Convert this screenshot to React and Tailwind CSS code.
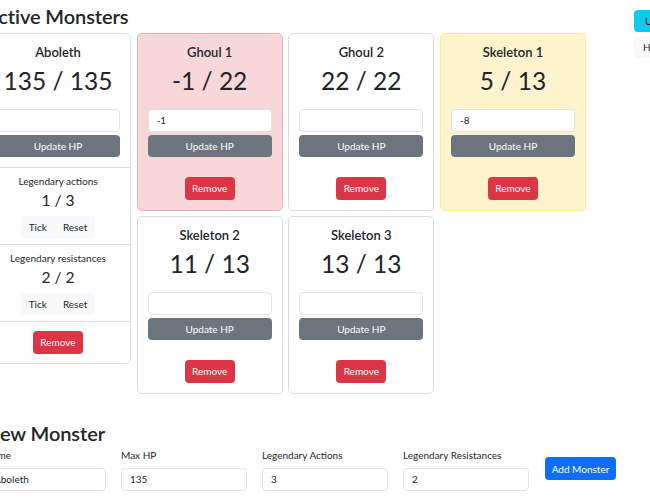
import React from "react";

const cardBase = "rounded-[5px] border text-center text-[#212529]";

function HpBody({ name, hp, value }) {
  return (
    <div className="px-[10px] pt-[10px] pb-[10px]">
      <div className="text-[13px] leading-[16px] font-semibold mb-[5px]">{name}</div>
      <div className="text-[24.5px] leading-[32px] mb-[12px]">{hp}</div>
      <input
        readOnly
        defaultValue={value}
        className="block w-full h-[23px] rounded-[4px] border border-[#dee2e6] bg-white px-[8px] text-[10px] text-left text-[#212529] outline-none"
      />
      <button className="block mt-[3px] w-full h-[22px] rounded-[4px] bg-[#6c757d] text-white text-[10px] leading-[16px]">
        Update HP
      </button>
    </div>
  );
}

function RemoveBtn() {
  return (
    <button className="h-[23px] w-[50px] rounded-[4px] bg-[#dc3545] text-white text-[10px] leading-[16px]">
      Remove
    </button>
  );
}

function Counter({ label, value }) {
  return (
    <div className="border-t border-[#dcdcdc] pt-[5px] pb-[6px]">
      <div className="text-[10px] leading-[16px]">{label}</div>
      <div className="text-[15.5px] leading-[19.2px] mt-[2px] mb-[5.6px]">{value}</div>
      <div className="flex justify-center">
        <div className="flex h-[22px] rounded-[4px] bg-[#f8f9fa] text-[10px] leading-[16px]">
          <button className="px-[8px]">Tick</button>
          <button className="px-[8px]">Reset</button>
        </div>
      </div>
    </div>
  );
}

function Card({ name, hp, value = "", variant }) {
  const v =
    variant === "danger"
      ? "bg-[#f8d7da] border-[#f1aeb5]"
      : variant === "warning"
      ? "bg-[#fff3cd] border-[#ffe69c]"
      : "bg-white border-[#dcdcdc]";
  return (
    <div className={`${cardBase} ${v}`}>
      <HpBody name={name} hp={hp} value={value} />
      <div className="flex justify-center px-[10px] pt-[10px] pb-[10px]">
        <RemoveBtn />
      </div>
    </div>
  );
}

function LegendCard() {
  return (
    <div className={`${cardBase} bg-white border-[#dcdcdc] row-span-2`}>
      <HpBody name="Aboleth" hp="135 / 135" value="" />
      <Counter label="Legendary actions" value="1 / 3" />
      <Counter label="Legendary resistances" value="2 / 2" />
      <div className="flex justify-center border-t border-[#dcdcdc] px-[10px] pt-[9px] pb-[9px]">
        <RemoveBtn />
      </div>
    </div>
  );
}

function Field({ label, value, w = "w-[126px]" }) {
  return (
    <div className={`${w} shrink-0`}>
      <div className="text-[10px] leading-[16px] mb-[5.3px] whitespace-nowrap">{label}</div>
      <input
        readOnly
        defaultValue={value}
        className="block w-full h-[23px] rounded-[4px] border border-[#dee2e6] bg-white px-[8px] text-[10px] text-[#212529] outline-none"
      />
    </div>
  );
}

export default function App() {
  return (
    <div className="w-[650px] h-[500px] overflow-hidden bg-white text-[#212529] font-['Lato',sans-serif]">
      <div className="flex">
        <div className="w-[634px] shrink-0 ml-[-15px] pt-[4px]">
          <h2 className="text-[20px] leading-[25.6px] font-semibold mb-[3.4px] tracking-[-0.1px]">Active Monsters</h2>
          <div className="grid grid-cols-[repeat(4,146px)] gap-x-[5.67px] gap-y-[5px] items-start">
            <LegendCard />
            <Card name="Ghoul 1" hp="-1 / 22" value="-1" variant="danger" />
            <Card name="Ghoul 2" hp="22 / 22" />
            <Card name="Skeleton 1" hp="5 / 13" value="-8" variant="warning" />
            <Card name="Skeleton 2" hp="11 / 13" />
            <Card name="Skeleton 3" hp="13 / 13" />
          </div>
          <h2 className="mt-[27px] text-[20px] leading-[25.6px] font-semibold tracking-[-0.1px]">New Monster</h2>
          <div className="flex items-center gap-x-[15px]">
            <Field label="Name" value="Aboleth" w="w-[121px]" />
            <Field label="Max HP" value="135" />
            <Field label="Legendary Actions" value="3" />
            <Field label="Legendary Resistances" value="2" />
            <button className="ml-[1px] h-[23px] w-[71px] rounded-[4px] bg-[#0d6efd] text-white text-[10px] leading-[16px] whitespace-nowrap">
              Add Monster
            </button>
          </div>
        </div>
        <div className="pl-[15px] pt-[10px] w-[200px] shrink-0">
          <button className="block h-[22px] px-[11px] rounded-[4px] bg-[#0dcaf0] text-black text-[10px] leading-[16px]">
            Undo
          </button>
          <div className="mt-[4px] h-[22px] px-[9px] rounded-[4px] bg-[#f8f9fa] text-[10px] leading-[22px]">
            History
          </div>
        </div>
      </div>
    </div>
  );
}
